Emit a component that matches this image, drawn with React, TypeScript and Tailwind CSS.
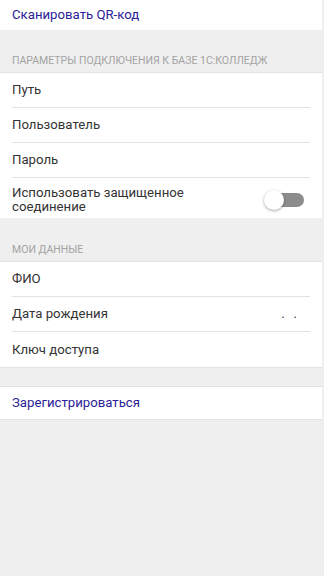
import React from "react";

const Row = ({ label, right, last }: { label: string; right?: React.ReactNode; last?: boolean }) => (
  <div className={`mx-3 flex h-[35px] items-center justify-between ${last ? "" : "border-b border-[#e2e2e2]"}`}>
    <span className="text-[13.2px] text-[#333333]">{label}</span>
    {right}
  </div>
);

export default function App() {
  return (
    <div
      className="min-h-[576px] w-[324px] bg-[#efefef]"
      style={{ fontFamily: "Roboto, 'Noto Sans', sans-serif" }}
    >
      <div className="w-[322px]">
        <div className="flex h-[30px] items-center bg-white px-3">
          <span className="text-[13.2px] text-[#2b2198]">Сканировать QR-код</span>
        </div>
        <div className="flex h-[43px] items-end border-b border-[#e2e2e2] px-3 pb-[5px]">
          <span className="text-[10.5px] leading-[12px] text-[#a3a3a3]">
            ПАРАМЕТРЫ ПОДКЛЮЧЕНИЯ К БАЗЕ 1С:КОЛЛЕДЖ
          </span>
        </div>
        <div className="bg-white">
          <Row label="Путь" />
          <Row label="Пользователь" />
          <Row label="Пароль" />
          <div className="mx-3 flex items-center justify-between pb-[4px] pt-[8px]">
            <span className="text-[13.2px] leading-[14px] text-[#333333]">
              Использовать защищенное
              <br />
              соединение
            </span>
            <div className="relative mr-[6px] h-[20px] w-[40px]">
              <div className="absolute right-0 top-[3px] h-[14px] w-[36px] rounded-full bg-[#8c8c8c]" />
              <div className="absolute left-0 top-0 h-[20px] w-[20px] rounded-full bg-white shadow-[0_1px_3px_rgba(0,0,0,0.35)]" />
            </div>
          </div>
        </div>
        <div className="flex h-[44px] items-end border-b border-[#e2e2e2] px-3 pb-[5px]">
          <span className="text-[10.5px] leading-[12px] text-[#a3a3a3]">МОИ ДАННЫЕ</span>
        </div>
        <div className="bg-white">
          <Row label="ФИО" />
          <Row
            label="Дата рождения"
            right={
              <span className="mr-[13px] flex gap-[9px] text-[13px] text-[#333333]">
                <span>.</span>
                <span>.</span>
              </span>
            }
          />
          <Row label="Ключ доступа" last />
        </div>
        <div className="h-[20px] border-y border-[#e2e2e2]" />
        <div className="flex h-[33px] items-center border-b border-[#e2e2e2] bg-white px-3">
          <span className="text-[13.2px] text-[#2b2198]">Зарегистрироваться</span>
        </div>
      </div>
    </div>
  );
}
